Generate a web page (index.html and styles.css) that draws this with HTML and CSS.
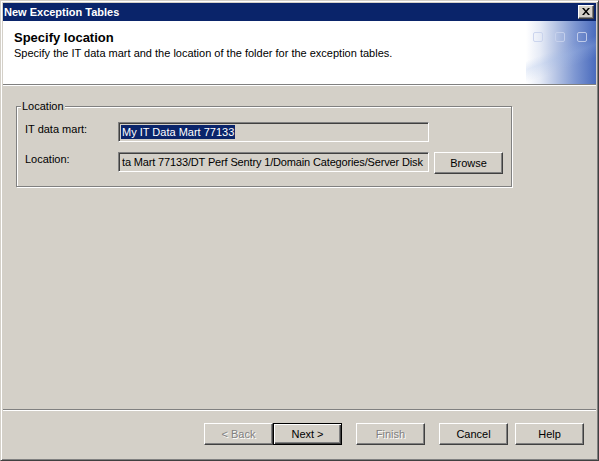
FILE: index.html
```html
<!DOCTYPE html>
<html>
<head>
<meta charset="utf-8">
<title>New Exception Tables</title>
<link rel="stylesheet" href="styles.css">
</head>
<body>
<div class="window">
  <div class="titlebar">
    <span class="title">New Exception Tables</span>
    <button class="close" aria-label="Close">
      <svg width="8" height="7" viewBox="0 0 8 7"><path d="M0 0h2l2 2.5L6 0h2L5 3.5 8 7H6L4 4.5 2 7H0l3-3.5z" fill="#000"/></svg>
    </button>
  </div>
  <div class="header">
    <div class="header-text">
      <div class="header-title">Specify location</div>
      <div class="header-sub">Specify the IT data mart and the location of the folder for the exception tables.</div>
    </div>
    <div class="header-deco">
      <span class="sq"></span><span class="sq"></span><span class="sq"></span>
    </div>
  </div>
  <div class="body">
    <div class="group">
      <div class="legend">Location</div>
      <div class="row">
        <span class="label">IT data mart:</span>
        <div class="field"><span class="sel">My IT Data Mart 77133</span></div>
      </div>
      <div class="row row2">
        <span class="label">Location:</span>
        <div class="field"><span class="txt">ta Mart 77133/DT Perf Sentry 1/Domain Categories/Server Disk</span></div>
        <button class="btn browse">Browse</button>
      </div>
    </div>
  </div>
  <div class="footer">
    <button class="btn disabled">&lt; Back</button>
    <button class="btn default">Next &gt;</button>
    <button class="btn disabled gap14">Finish</button>
    <button class="btn gap14">Cancel</button>
    <button class="btn gap7">Help</button>
  </div>
</div>
</body>
</html>
```

FILE: styles.css
```css
* { box-sizing: border-box; }
html, body { margin: 0; padding: 0; }
body {
  width: 599px;
  height: 461px;
  font-family: "Liberation Sans", Arial, sans-serif;
  font-size: 11px;
  color: #000;
  background: #d4d0c8;
}
.window {
  width: 599px;
  height: 461px;
  display: flex;
  flex-direction: column;
  background: #d4d0c8;
  border-style: solid;
  border-width: 1px;
  border-color: #d4d0c8 #404040 #404040 #d4d0c8;
  box-shadow: inset 1px 1px 0 #fff, inset -1px -1px 0 #808080;
  padding: 2px;
}
.titlebar {
  height: 18px;
  flex: none;
  background: #0a246a;
  display: flex;
  align-items: center;
  justify-content: space-between;
  padding: 0 2px 0 1px;
}
.title {
  color: #fff;
  font-weight: bold;
  font-size: 11px;
  line-height: 13px;
}
.close {
  width: 16px;
  height: 14px;
  padding: 0;
  margin: 0;
  background: #d4d0c8;
  border-style: solid;
  border-width: 1px;
  border-color: #fff #404040 #404040 #fff;
  box-shadow: inset -1px -1px 0 #808080;
  display: flex;
  align-items: center;
  justify-content: center;
}
.close svg { display: block; margin-top: -1px; margin-left: -1px; }
.header {
  height: 64px;
  flex: none;
  background: #fff;
  border-bottom: 1px solid #808080;
  box-shadow: 0 1px 0 #fff;
  margin-bottom: 1px;
  display: flex;
}
.header-text {
  flex: 1;
  padding: 9px 0 0 11px;
}
.header-title {
  font-weight: bold;
  font-size: 13px;
  line-height: 15px;
}
.header-sub {
  margin-top: 2px;
  line-height: 13px;
}
.header-deco {
  width: 70px;
  flex: none;
  background:
    linear-gradient(160deg, rgba(255,255,255,0) 45%, rgba(160,185,230,0.25) 55%, rgba(255,255,255,0) 70%),
    linear-gradient(90deg, #ffffff 0%, #e6ebf6 20%, #b2c1e3 45%, #7e97d2 70%, #4a6bbd 100%);
  display: flex;
  align-items: flex-start;
  padding: 11px 0 0 7px;
  gap: 12px;
}
.sq {
  width: 10px;
  height: 10px;
  border: 1px solid rgba(200, 210, 236, 0.9);
  border-radius: 2px;
}
.body {
  flex: 1;
  padding: 20px 0 0 13px;
}
.group {
  width: 496px;
  border: 1px solid #808080;
  box-shadow: inset 1px 1px 0 #fff, 1px 1px 0 #fff;
  padding: 0 8px 12px 8px;
}
.legend {
  display: block;
  width: max-content;
  margin: -7px 0 0 -4px;
  padding: 0 1px;
  line-height: 13px;
  background: #d4d0c8;
}
.row {
  display: flex;
  align-items: flex-start;
  margin-top: 9px;
}
.row2 { margin-top: 10px; }
.label {
  width: 93px;
  flex: none;
  line-height: 13px;
  padding-top: 1px;
}
.field {
  width: 311px;
  height: 20px;
  flex: none;
  border-style: solid;
  border-width: 1px;
  border-color: #808080 #fff #fff #808080;
  box-shadow: inset 1px 1px 0 #404040, inset -1px -1px 0 #d4d0c8;
  padding: 2px 2px 0 2px;
  overflow: hidden;
  white-space: nowrap;
  line-height: 14px;
}
.sel {
  display: inline-block;
  background: #0a246a;
  color: #fff;
  padding: 0 1px;
}
.txt { padding-left: 1px; letter-spacing: -0.15px; }
.btn {
  width: 69px;
  height: 22px;
  flex: none;
  margin: 0;
  padding: 0;
  font-family: "Liberation Sans", Arial, sans-serif;
  font-size: 11px;
  color: #000;
  background: #d4d0c8;
  border-style: solid;
  border-width: 1px;
  border-color: #fff #404040 #404040 #fff;
  box-shadow: inset -1px -1px 0 #808080;
}
.browse { margin-left: 5px; }
.btn.disabled {
  color: #808080;
  text-shadow: 1px 1px 0 #fff;
}
.btn.default {
  border: 1px solid #000;
  box-shadow: inset 1px 1px 0 #fff, inset -1px -1px 0 #404040, inset -2px -2px 0 #808080;
}
.gap14 { margin-left: 14px; }
.gap7 { margin-left: 7px; }
.footer {
  height: 49px;
  flex: none;
  border-top: 1px solid #808080;
  box-shadow: inset 0 1px 0 #fff;
  display: flex;
  justify-content: flex-end;
  align-items: flex-start;
  padding: 13px 12px 0 0;
}
```
